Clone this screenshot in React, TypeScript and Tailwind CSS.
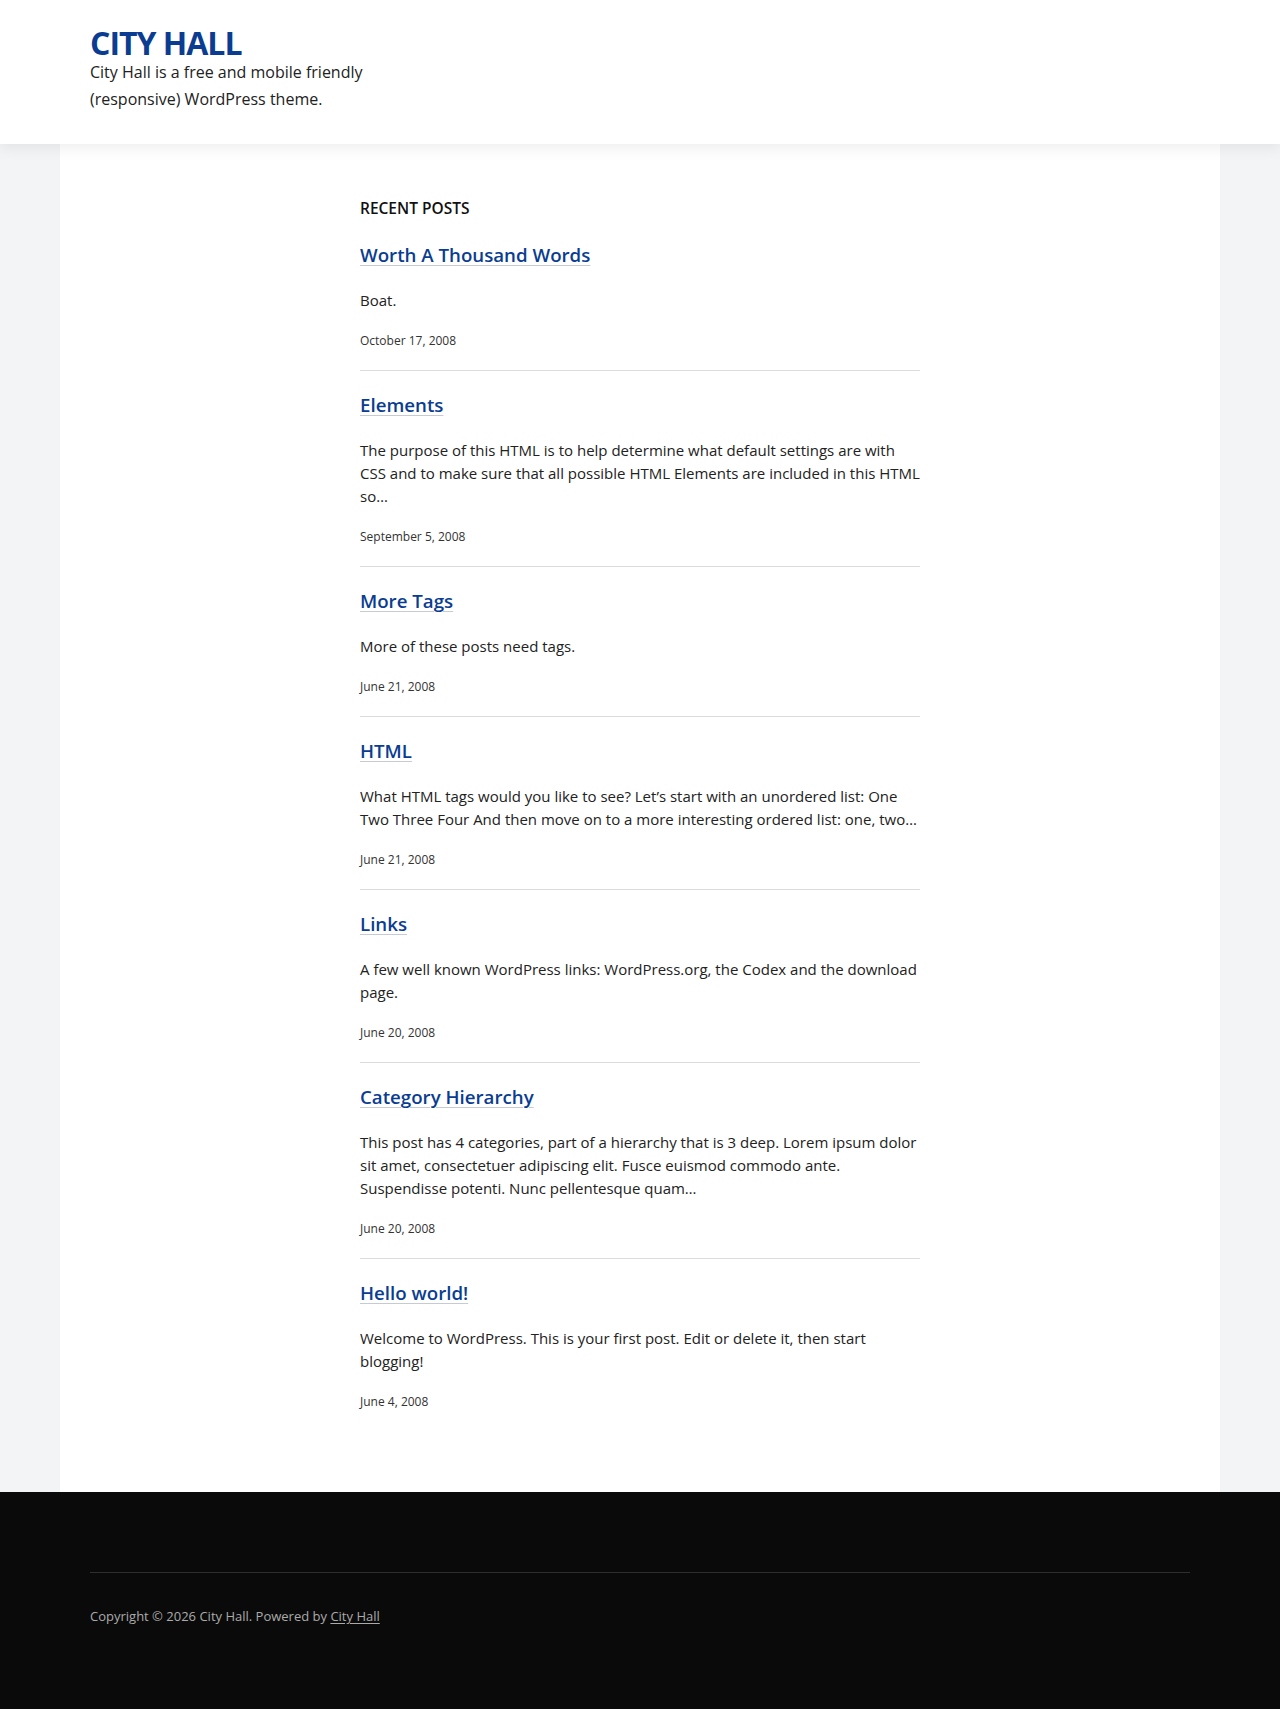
const posts = [
  {
    title: "Worth A Thousand Words",
    excerpt: "Boat.",
    date: "October 17, 2008",
  },
  {
    title: "Elements",
    excerpt:
      "The purpose of this HTML is to help determine what default settings are with CSS and to make sure that all possible HTML Elements are included in this HTML so…",
    date: "September 5, 2008",
  },
  {
    title: "More Tags",
    excerpt: "More of these posts need tags.",
    date: "June 21, 2008",
  },
  {
    title: "HTML",
    excerpt:
      "What HTML tags would you like to see? Let’s start with an unordered list: One Two Three Four And then move on to a more interesting ordered list: one, two…",
    date: "June 21, 2008",
  },
  {
    title: "Links",
    excerpt:
      "A few well known WordPress links: WordPress.org, the Codex and the download page.",
    date: "June 20, 2008",
  },
  {
    title: "Category Hierarchy",
    excerpt:
      "This post has 4 categories, part of a hierarchy that is 3 deep. Lorem ipsum dolor sit amet, consectetuer adipiscing elit. Fusce euismod commodo ante. Suspendisse potenti. Nunc pellentesque quam…",
    date: "June 20, 2008",
  },
  {
    title: "Hello world!",
    excerpt:
      "Welcome to WordPress. This is your first post. Edit or delete it, then start blogging!",
    date: "June 4, 2008",
  },
];

export default function App() {
  return (
    <div className="bg-[#f3f4f6] font-['Open_Sans','Noto_Sans',sans-serif] text-[#222]">
      <header className="relative z-10 bg-white px-[90px] pt-[27px] pb-[31px] shadow-[0_4px_14px_rgba(0,0,0,0.07)]">
        <a href="#" className="block text-[32px] font-bold leading-[32px] tracking-[-1px] text-[#0a3d91]">
          CITY HALL
        </a>
        <p className="w-[300px] text-[16px] leading-[27px] text-[#222]">
          City Hall is a free and mobile friendly (responsive) WordPress theme.
        </p>
      </header>

      <main className="mx-[60px] bg-white pt-[52px] pb-[61px]">
        <section className="mx-auto w-[560px]">
          <h2 className="mb-[1px] text-[15.5px] font-semibold uppercase leading-[24px] text-[#111]">Recent Posts</h2>
          {posts.map((post, i) => (
            <article
              key={post.title}
              className={i < posts.length - 1 ? "border-b border-[#dcdcdc] pt-5 pb-5" : "pt-5 pb-5"}
            >
              <h3 className="text-[18.7px] font-semibold leading-[28px]">
                <a
                  href="#"
                  className="text-[#0a3d91] underline decoration-[#c5cad3] decoration-1 underline-offset-[3px]"
                >
                  {post.title}
                </a>
              </h3>
              <p className="mt-5 text-[15px] leading-[23px] text-[#222]">{post.excerpt}</p>
              <p className="mt-5 text-[12px] leading-[18px] text-[#333]">{post.date}</p>
            </article>
          ))}
        </section>
      </main>

      <footer className="bg-[#0a0a0a] px-[90px] pt-[80px] pb-[86px]">
        <div className="border-t border-[#2e2e2e] pt-[33px] text-[13px] leading-[20px] text-[#aaa]">
          Copyright © 2026 City Hall. Powered by{" "}
          <a href="#" className="underline underline-offset-2">
            City Hall
          </a>
        </div>
      </footer>
    </div>
  );
}
